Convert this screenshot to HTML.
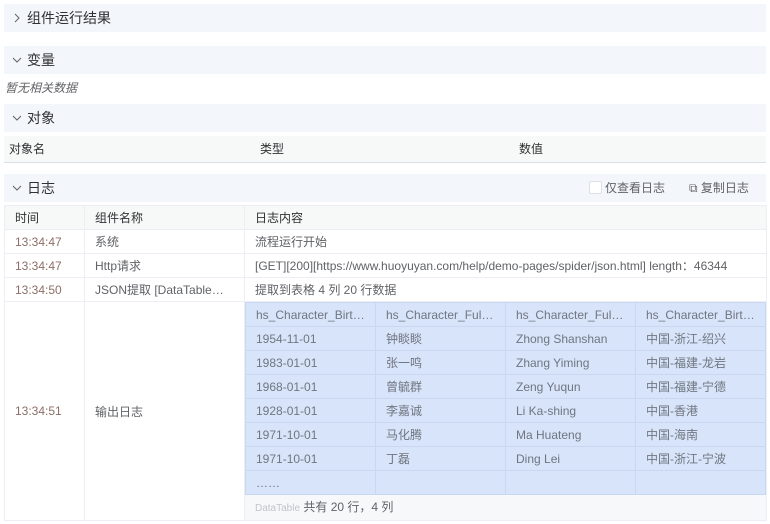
<!DOCTYPE html>
<html><head><meta charset="utf-8"><style>
*{margin:0;padding:0;box-sizing:border-box}
body{width:770px;height:524px;background:#fff;font-family:"Liberation Sans","Noto Sans CJK SC",sans-serif;font-size:12px;color:#606266;position:relative;overflow:hidden}
.bar{position:absolute;left:4px;width:762px;height:28px;background:#f3f6fb;font-size:14px;color:#303133;line-height:28px;padding-left:23px}
.bar svg{position:absolute;left:8px;top:9px}
.abs{position:absolute}
table{border-collapse:collapse;position:absolute;table-layout:fixed}
td{border:1px solid #ebeef5;height:24px;padding:0 10px;white-space:nowrap;overflow:hidden;text-overflow:ellipsis;vertical-align:middle}
.t{color:#8c6e66}
.inner td{border:1px solid #c9d8f0;background:#d8e4fa;color:#707680;padding:0 10px;height:24px}
</style></head><body>
<div class="bar" style="top:4px"><svg width="10" height="10" viewBox="0 0 10 10"><path d="M3 1l4 4-4 4" fill="none" stroke="#606266" stroke-width="1"/></svg>组件运行结果</div>
<div class="bar" style="top:46px"><svg width="10" height="10" viewBox="0 0 10 10"><path d="M1 3l4 4 4-4" fill="none" stroke="#606266" stroke-width="1"/></svg>变量</div>
<div class="abs" style="left:5px;top:79px;font-style:italic;color:#606266">暂无相关数据</div>
<div class="bar" style="top:104px"><svg width="10" height="10" viewBox="0 0 10 10"><path d="M1 3l4 4 4-4" fill="none" stroke="#606266" stroke-width="1"/></svg>对象</div>
<div class="abs" style="left:4px;top:136px;width:762px;height:27px;background:#f7f8f8;border-bottom:1px solid #dcdfe6;color:#303133;line-height:27px">
<span class="abs" style="left:5px">对象名</span><span class="abs" style="left:256px">类型</span><span class="abs" style="left:515px">数值</span></div>
<div class="bar" style="top:174px"><svg width="10" height="10" viewBox="0 0 10 10"><path d="M1 3l4 4 4-4" fill="none" stroke="#606266" stroke-width="1"/></svg>日志
<span class="abs" style="left:585px;top:7px;width:13px;height:13px;border:1px solid #dcdfe6;border-radius:2px;background:#fff"></span>
<span class="abs" style="left:601px;font-size:12px;color:#606266">仅查看日志</span>
<span class="abs" style="left:685px;font-size:12px;color:#606266">⧉ 复制日志</span></div>
<table style="left:4px;top:205px;width:762px">
<colgroup><col style="width:80px"><col style="width:160px"><col style="width:522px"></colgroup>
<tr style="background:#f7f8f8;color:#303133"><td style="height:23px">时间</td><td>组件名称</td><td>日志内容</td></tr>
<tr><td class="t">13:34:47</td><td>系统</td><td>流程运行开始</td></tr>
<tr><td class="t">13:34:47</td><td>Http请求</td><td>[GET][200][https://www.huoyuyan.com/help/demo-pages/spider/json.html] length：46344</td></tr>
<tr><td class="t">13:34:50</td><td>JSON提取 [DataTable…</td><td>提取到表格 4 列 20 行数据</td></tr>
<tr style="height:218px"><td class="t">13:34:51</td><td>输出日志</td><td style="padding:0;vertical-align:top">
<table class="inner" style="position:static;width:520px;table-layout:fixed">
<colgroup><col style="width:130px"><col style="width:130px"><col style="width:130px"><col style="width:130px"></colgroup>
<tr><td>hs_Character_Birt…</td><td>hs_Character_Ful…</td><td>hs_Character_Ful…</td><td>hs_Character_Birt…</td></tr>
<tr><td>1954-11-01</td><td>钟睒睒</td><td>Zhong Shanshan</td><td>中国-浙江-绍兴</td></tr>
<tr><td>1983-01-01</td><td>张一鸣</td><td>Zhang Yiming</td><td>中国-福建-龙岩</td></tr>
<tr><td>1968-01-01</td><td>曾毓群</td><td>Zeng Yuqun</td><td>中国-福建-宁德</td></tr>
<tr><td>1928-01-01</td><td>李嘉诚</td><td>Li Ka-shing</td><td>中国-香港</td></tr>
<tr><td>1971-10-01</td><td>马化腾</td><td>Ma Huateng</td><td>中国-海南</td></tr>
<tr><td>1971-10-01</td><td>丁磊</td><td>Ding Lei</td><td>中国-浙江-宁波</td></tr>
<tr><td>……</td><td></td><td></td><td></td></tr>
</table>
<div style="height:25px;line-height:25px;padding-left:10px;background:#f7f8fa;color:#606266"><span style="font-size:10px;color:#c0c4cc">DataTable</span> 共有 20 行，4 列</div>
</td></tr>
</table>
</body></html>
